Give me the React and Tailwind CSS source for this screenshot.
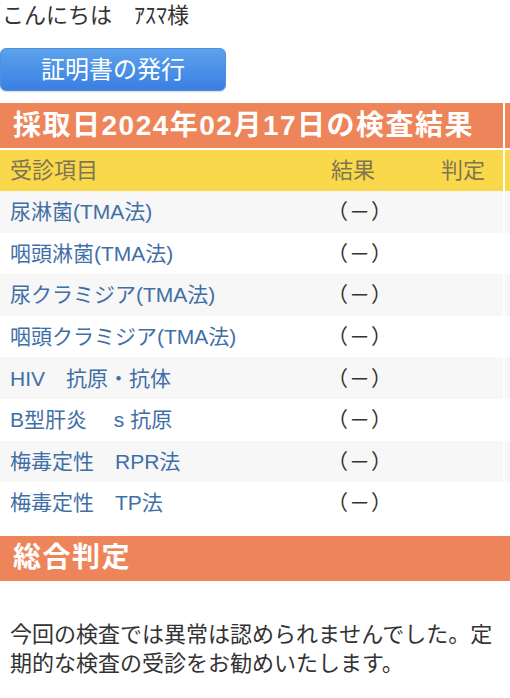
import React from 'react';

const items = [
  '尿淋菌(TMA法)',
  '咽頭淋菌(TMA法)',
  '尿クラミジア(TMA法)',
  '咽頭クラミジア(TMA法)',
  'HIV　抗原・抗体',
  'B型肝炎　 s 抗原',
  '梅毒定性　RPR法',
  '梅毒定性　TP法',
];

const font = { fontFamily: '"Liberation Sans", "Noto Sans CJK JP", sans-serif' };

export default function App() {
  return (
    <div className="min-h-[698px] bg-white text-[#333]" style={font}>
      {/* Greeting */}
      <div className="h-[32px] flex items-center pl-[2px] text-[22px] leading-none">
        こんにちは　ｱｽﾏ様
      </div>

      {/* Certificate button */}
      <div className="pt-[16px]">
        <button className="w-[226px] h-[43px] rounded-[6px] bg-gradient-to-b from-[#5da2ec] to-[#3a7fe2] border border-[#4f8fe0] text-white text-[24px] leading-none flex items-center justify-center shadow-[0_1px_1px_rgba(0,0,0,0.15)]">
          証明書の発行
        </button>
      </div>

      {/* Results table */}
      <div className="mt-[12px]">
        <div className="flex h-[45px] gap-[2px]">
          <div className="w-[503px] bg-[#ee855a] text-white font-bold text-[28px] tracking-[1.5px] leading-none flex items-center pl-[13px]">
            採取日2024年02月17日の検査結果
          </div>
          <div className="flex-1 bg-[#ee855a]" />
        </div>
        <div className="flex h-[41px] gap-[2px] mt-[2px]">
          <div className="w-[503px] bg-[#f9d84b] text-[#7f7552] text-[22px] leading-none flex items-center">
            <span className="pl-[10px] flex-1">受診項目</span>
            <span className="w-[110px]">結果</span>
            <span className="w-[62px]">判定</span>
          </div>
          <div className="flex-1 bg-[#f9d84b]" />
        </div>
        {items.map((name, i) => (
          <div key={name} className="flex h-[41.6px] gap-[2px]">
            <div
              className={`w-[503px] flex items-center text-[21px] leading-none ${
                i % 2 === 0 ? 'bg-[#f7f7f7]' : 'bg-white'
              }`}
            >
              <span className="pl-[10px] w-[327px] text-[#3f6fa6] whitespace-pre">{name}</span>
              <span className="text-[#333] tracking-[1px]">（－）</span>
            </div>
            <div className={`flex-1 ${i % 2 === 0 ? 'bg-[#f7f7f7]' : 'bg-white'}`} />
          </div>
        ))}
      </div>

      {/* Overall judgement */}
      <div className="mt-[12px] h-[45px] bg-[#ee855a] text-white font-bold text-[28px] tracking-[1.5px] leading-none flex items-center pl-[13px]">
        総合判定
      </div>
      <p className="pt-[39px] px-[10px] text-[22px] leading-[29px] text-[#333]">
        今回の検査では異常は認められませんでした。定期的な検査の受診をお勧めいたします。
      </p>
    </div>
  );
}
